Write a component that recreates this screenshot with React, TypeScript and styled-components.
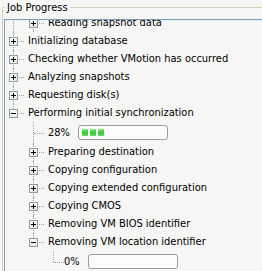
import styled, { createGlobalStyle } from "styled-components"

const GlobalStyle = createGlobalStyle`
  html, body {
    margin: 0;
    padding: 0;
    background: #f6f6f4;
  }
  body {
    font-family: "DejaVu Sans Condensed", "DejaVu Sans", sans-serif;
    font-size: 11px;
    color: #000;
  }
`

type Node = {
  label: string
  level: number
  expander?: "plus" | "minus"
  progress?: number
  // ancestor levels that still draw a vertical guide through this row
  guides: number[]
  // does the own-level line go on below this row
  more: boolean
}

const nodes: Node[] = [
  { label: "Reading snapshot data", level: 1, expander: "plus", guides: [0], more: true },
  { label: "Initializing database", level: 0, expander: "plus", guides: [], more: true },
  { label: "Checking whether VMotion has occurred", level: 0, expander: "plus", guides: [], more: true },
  { label: "Analyzing snapshots", level: 0, expander: "plus", guides: [], more: true },
  { label: "Requesting disk(s)", level: 0, expander: "plus", guides: [], more: true },
  { label: "Performing initial synchronization", level: 0, expander: "minus", guides: [], more: false },
  { label: "28%", level: 1, progress: 28, guides: [], more: true },
  { label: "Preparing destination", level: 1, expander: "plus", guides: [], more: true },
  { label: "Copying configuration", level: 1, expander: "plus", guides: [], more: true },
  { label: "Copying extended configuration", level: 1, expander: "plus", guides: [], more: true },
  { label: "Copying CMOS", level: 1, expander: "plus", guides: [], more: true },
  { label: "Removing VM BIOS identifier", level: 1, expander: "plus", guides: [], more: true },
  { label: "Removing VM location identifier", level: 1, expander: "minus", guides: [], more: false },
  { label: "0%", level: 2, progress: 0, guides: [], more: false },
]

const GroupBox = styled.fieldset`
  margin: 0 0 0 2px;
  padding: 0;
  height: 271px;
  box-sizing: border-box;
  border: 0;
  border-top: 1px solid #d0d0bf;
  border-left: 1px solid #d0d0bf;
  min-width: 0;
`

const Legend = styled.legend`
  margin-left: 2px;
  padding: 0 2px;
  font-size: 11px;
  line-height: 15px;
`

const TreeFrame = styled.div`
  margin: 4px 0 0 1px;
  height: 260px;
  border-top: 1px solid #7f9db9;
  border-left: 1px solid #7f9db9;
  overflow: hidden;
  box-shadow: inset 0 1px 0 #e4eef7;
`

const TreeList = styled.ul`
  list-style: none;
  margin: -6px 0 0;
  padding: 0;
`

const Row = styled.li<{ $tall?: boolean }>`
  display: flex;
  align-items: center;
  height: ${({ $tall }) => ($tall ? "21px" : "18px")};
  white-space: nowrap;
`

const Cell = styled.span<{ $vertical?: "full" | "top" | "none"; $branch?: boolean }>`
  position: relative;
  flex-shrink: 0;
  width: 20px;
  align-self: stretch;

  &::before {
    content: "";
    position: absolute;
    left: 8px;
    top: 0;
    bottom: ${({ $vertical }) => ($vertical === "top" ? "50%" : "0")};
    border-left: 1px dotted #a0a0a0;
    display: ${({ $vertical }) => ($vertical === "none" || !$vertical ? "none" : "block")};
  }

  &::after {
    content: "";
    position: absolute;
    left: 9px;
    width: 10px;
    top: 50%;
    border-top: 1px dotted #a0a0a0;
    display: ${({ $branch }) => ($branch ? "block" : "none")};
  }
`

const Expander = styled.span`
  position: absolute;
  left: 4px;
  top: 50%;
  margin-top: -4px;
  width: 7px;
  height: 7px;
  border: 1px solid #8c9cab;
  background: linear-gradient(135deg, #ffffff 0%, #e8e8e0 100%);
  z-index: 1;
`

const Sign = styled.svg`
  position: absolute;
  left: 0;
  top: 0;
`

const Label = styled.span`
  padding-left: 3px;
  line-height: 18px;
`

const ProgressLabel = styled.span<{ $shift?: boolean }>`
  padding-left: ${({ $shift }) => ($shift ? "0" : "3px")};
  margin-left: ${({ $shift }) => ($shift ? "-1px" : "0")};
  margin-right: 8px;
`

const Bar = styled.span`
  display: flex;
  gap: 2px;
  box-sizing: border-box;
  width: 90px;
  height: 15px;
  padding: 3px 3px;
  border: 1px solid #9c9c9c;
  border-radius: 3px;
  background: #fbfbfb;
`

const Block = styled.span`
  width: 6px;
  height: 100%;
  background: linear-gradient(#8ae88a, #33cc33 50%, #66d966);
`

function ExpanderBox({ open }: { open: boolean }) {
  return (
    <Expander>
      <Sign width="7" height="7" viewBox="0 0 7 7">
        <rect x="1" y="3" width="5" height="1" fill="#000" />
        {!open && <rect x="3" y="1" width="1" height="5" fill="#000" />}
      </Sign>
    </Expander>
  )
}

function TreeRow({ node }: { node: Node }) {
  const cells = []
  for (let i = 0; i < node.level; i++) {
    cells.push(<Cell key={i} $vertical={node.guides.includes(i) ? "full" : "none"} />)
  }
  cells.push(
    <Cell key="own" $vertical={node.more ? "full" : "top"} $branch>
      {node.expander && <ExpanderBox open={node.expander === "minus"} />}
    </Cell>
  )
  const blocks = node.progress ? Math.round((node.progress / 100) * 11) : 0

  return (
    <Row $tall={node.progress !== undefined}>
      {cells}
      {node.progress !== undefined ? (
        <>
          <ProgressLabel $shift={node.level > 1}>{node.label}</ProgressLabel>
          <Bar>
            {Array.from({ length: blocks }, (_, i) => (
              <Block key={i} />
            ))}
          </Bar>
        </>
      ) : (
        <Label>{node.label}</Label>
      )}
    </Row>
  )
}

export default function App() {
  return (
    <>
      <GlobalStyle />
      <GroupBox>
        <Legend>Job Progress</Legend>
        <TreeFrame>
          <TreeList>
            {nodes.map((n, i) => (
              <TreeRow key={i} node={n} />
            ))}
          </TreeList>
        </TreeFrame>
      </GroupBox>
    </>
  )
}
